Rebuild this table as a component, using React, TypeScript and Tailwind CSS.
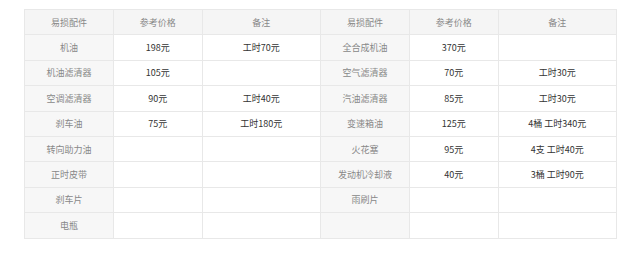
import React from "react";

const rows: [string, string, string, string, string, string][] = [
  ["机油", "198元", "工时70元", "全合成机油", "370元", ""],
  ["机油滤清器", "105元", "", "空气滤清器", "70元", "工时30元"],
  ["空调滤清器", "90元", "工时40元", "汽油滤清器", "85元", "工时30元"],
  ["刹车油", "75元", "工时180元", "变速箱油", "125元", "4桶 工时340元"],
  ["转向助力油", "", "", "火花塞", "95元", "4支 工时40元"],
  ["正时皮带", "", "", "发动机冷却液", "40元", "3桶 工时90元"],
  ["刹车片", "", "", "雨刷片", "", ""],
  ["电瓶", "", "", "", "", ""],
];

const head = ["易损配件", "参考价格", "备注", "易损配件", "参考价格", "备注"];
const widths = ["w-[15%]", "w-[15%]", "w-[20%]", "w-[15%]", "w-[15%]", "w-[20%]"];

export default function App() {
  return (
    <div className="w-[640px] h-[257px] bg-white pt-[9px] pl-[24px]" style={{ fontFamily: '"Noto Sans CJK SC", "Liberation Sans", sans-serif' }}>
      <table className="w-[593px] border-collapse table-fixed text-[9px] leading-none">
        <thead>
          <tr>
            {head.map((h, i) => (
              <th key={i} className={`${widths[i]} h-[25.4px] border border-[#e8e8e8] bg-[#f5f5f5] font-normal text-[#888] text-center`}>
                {h}
              </th>
            ))}
          </tr>
        </thead>
        <tbody>
          {rows.map((r, ri) => (
            <tr key={ri}>
              {r.map((c, ci) => (
                <td
                  key={ci}
                  className={`h-[25.4px] border border-[#e8e8e8] text-center ${
                    ci === 0 || ci === 3 ? "bg-[#f7f7f7] text-[#888]" : "bg-white text-[#333]"
                  }`}
                >
                  {c}
                </td>
              ))}
            </tr>
          ))}
        </tbody>
      </table>
    </div>
  );
}
